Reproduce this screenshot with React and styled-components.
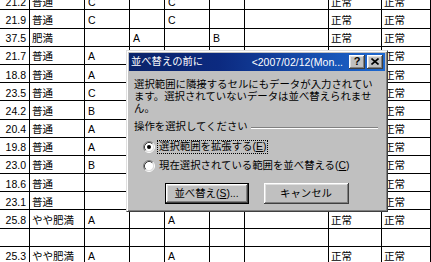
import React from "react";
import styled, { createGlobalStyle } from "styled-components";

const Global = createGlobalStyle`
  html, body { margin: 0; padding: 0; background: #fff; overflow: hidden; }
  #root { width: 431px; height: 262px; }
`;

const FONT = `"Liberation Sans", "Noto Sans CJK JP", sans-serif`;

const Screen = styled.div`
  position: relative;
  width: 431px;
  height: 262px;
  overflow: hidden;
  background: #fff;
  font-family: ${FONT};
`;

const Sheet = styled.div`
  display: grid;
  grid-template-columns: 30px 55px 45px 35px 45px 35px 84px 53px 49px;
  grid-auto-rows: 18.2px;
  margin-top: -7.8px;
`;

const Cell = styled.div`
  box-sizing: border-box;
  border-right: 1px solid #000;
  border-bottom: 1px solid #000;
  display: flex;
  align-items: center;
  justify-content: ${(p) => (p.$num ? "flex-end" : "flex-start")};
  padding: 2px ${(p) => (p.$num ? "3px" : "0")} 0 ${(p) => (p.$num ? "0" : p.$pad || "2px")};
  font-size: 10.5px;
  line-height: 12px;
  color: #000;
  white-space: nowrap;
  overflow: hidden;
`;

const rows = [
  ["21.2", "普通", "C", "", "C", "", "", "正常", "正常"],
  ["21.9", "普通", "C", "", "C", "", "", "正常", "正常"],
  ["37.5", "肥満", "", "A", "", "B", "", "正常", "正常"],
  ["21.7", "普通", "A", "", "", "", "", "", "正常"],
  ["18.8", "普通", "A", "", "", "", "", "", "正常"],
  ["23.5", "普通", "C", "", "", "", "", "", "正常"],
  ["24.2", "普通", "B", "", "", "", "", "", "正常"],
  ["20.4", "普通", "A", "", "", "", "", "", "正常"],
  ["19.8", "普通", "A", "", "", "", "", "", "正常"],
  ["23.0", "普通", "B", "", "", "", "", "", "正常"],
  ["18.6", "普通", "", "", "", "", "", "", "正常"],
  ["23.1", "普通", "", "", "", "", "", "", "正常"],
  ["25.8", "やや肥満", "A", "", "A", "", "", "正常", "正常"],
  ["", "", "", "", "", "", "", "", ""],
  ["25.3", "やや肥満", "A", "", "A", "", "", "正常", "正常"],
];

/* ---------- dialog ---------- */

const Dialog = styled.div`
  position: absolute;
  left: 126px;
  top: 50px;
  width: 262px;
  height: 162px;
  box-sizing: border-box;
  background: #c0c0c0;
  border: 1px solid;
  border-color: #dfdfdf #404040 #404040 #dfdfdf;
  box-shadow: inset 1px 1px #fff, inset -1px -1px #808080;
  padding: 2px;
  display: flex;
  flex-direction: column;
  font-size: 10.4px;
  color: #000;
`;

const TitleBar = styled.div`
  height: 18px;
  flex: none;
  display: flex;
  align-items: center;
  padding: 0 2px;
  background: linear-gradient(90deg, #0a246a 0%, #0c2a80 35%, #1d68d0 100%);
  color: #fff;
`;

const TitleText = styled.span`
  font-size: 10.3px;
  line-height: 12px;
  white-space: nowrap;
`;

const TitleExtra = styled.span`
  margin-left: auto;
  margin-right: 6px;
  font-size: 10.5px;
  line-height: 12px;
  white-space: nowrap;
`;

const CapButton = styled.div`
  width: 16px;
  height: 14px;
  box-sizing: border-box;
  background: #c0c0c0;
  box-shadow: inset -1px -1px #404040, inset 1px 1px #fff, inset -2px -2px #808080, inset 2px 2px #dfdfdf;
  display: flex;
  align-items: center;
  justify-content: center;
  color: #000;
  font-weight: bold;
  font-size: 11px;
  line-height: 11px;
  margin-left: ${(p) => (p.$gap ? "2px" : "0")};
  padding-bottom: 1px;
`;

const Body = styled.div`
  display: flex;
  flex-direction: column;
  padding: 0 5px;
`;

const Message = styled.div`
  margin-top: 8px;
  line-height: 12px;
  white-space: nowrap;
`;

const GroupLabel = styled.div`
  margin-top: 6px;
  height: 12px;
  line-height: 12px;
  display: flex;
  align-items: center;
  white-space: nowrap;
`;

const Rule = styled.div`
  flex: 1;
  height: 0;
  border-top: 1px solid #808080;
  border-bottom: 1px solid #fff;
  margin: 1px 2px 0 3px;
`;

const RadioRow = styled.div`
  height: 19px;
  display: flex;
  align-items: center;
  margin-left: 9px;
  white-space: nowrap;
  margin-top: ${(p) => (p.$first ? "4px" : "0")};
`;

const RadioLabel = styled.span`
  margin-left: 2px;
  padding: 0 1px;
  line-height: 12px;
  border: 1px dotted ${(p) => (p.$focused ? "#000" : "transparent")};
`;

const Buttons = styled.div`
  display: flex;
  justify-content: center;
  gap: 15px;
  margin-top: 8px;
  padding-right: 1px;
`;

const PushButton = styled.div`
  width: ${(p) => p.$w}px;
  height: 21px;
  box-sizing: border-box;
  background: #c0c0c0;
  display: flex;
  align-items: center;
  justify-content: center;
  white-space: nowrap;
  line-height: 12px;
  border: ${(p) => (p.$default ? "1px solid #000" : "none")};
  box-shadow: inset -1px -1px #404040, inset 1px 1px #fff, inset -2px -2px #808080, inset 2px 2px #dfdfdf;
`;

const U = styled.span`
  text-decoration: underline;
`;

function Radio({ checked }) {
  return (
    <svg width="12" height="12" viewBox="0 0 12 12">
      <circle cx="6" cy="6" r="4.5" fill="#fff" />
      <path d="M2.11 9.89 A5.5 5.5 0 0 1 9.89 2.11" fill="none" stroke="#808080" />
      <path d="M9.89 2.11 A5.5 5.5 0 0 1 2.11 9.89" fill="none" stroke="#fff" />
      <path d="M2.82 9.18 A4.5 4.5 0 0 1 9.18 2.82" fill="none" stroke="#404040" />
      <path d="M9.18 2.82 A4.5 4.5 0 0 1 2.82 9.18" fill="none" stroke="#dfdfdf" />
      {checked && <circle cx="6" cy="6" r="2" fill="#000" />}
    </svg>
  );
}

function CloseGlyph() {
  return (
    <svg width="8" height="7" viewBox="0 0 8 7">
      <path d="M0.5 0.5 L7.5 6.5 M7.5 0.5 L0.5 6.5" stroke="#000" strokeWidth="1.6" />
    </svg>
  );
}

export default function App() {
  return (
    <Screen>
      <Global />
      <Sheet>
        {rows.map((r, i) =>
          r.map((v, j) => (
            <Cell key={`${i}-${j}`} $num={j === 0} $pad={j >= 2 && j <= 5 ? "3px" : "2px"}>
              {v}
            </Cell>
          ))
        )}
      </Sheet>
      <Dialog>
        <TitleBar>
          <TitleText>並べ替えの前に</TitleText>
          <TitleExtra>&lt;2007/02/12(Mon...</TitleExtra>
          <CapButton>?</CapButton>
          <CapButton $gap>
            <CloseGlyph />
          </CapButton>
        </TitleBar>
        <Body>
          <Message>
            選択範囲に隣接するセルにもデータが入力されてい
            <br />
            ます。選択されていないデータは並べ替えられませ
            <br />
            ん。
          </Message>
          <GroupLabel>
            <span>操作を選択してください</span>
            <Rule />
          </GroupLabel>
          <RadioRow $first>
            <Radio checked />
            <RadioLabel $focused>
              選択範囲を拡張する(<U>E</U>)
            </RadioLabel>
          </RadioRow>
          <RadioRow>
            <Radio />
            <RadioLabel>
              現在選択されている範囲を並べ替える(<U>C</U>)
            </RadioLabel>
          </RadioRow>
          <Buttons>
            <PushButton $default $w={84}>
              並べ替え(<U>S</U>)...
            </PushButton>
            <PushButton $w={85}>キャンセル</PushButton>
          </Buttons>
        </Body>
      </Dialog>
    </Screen>
  );
}
